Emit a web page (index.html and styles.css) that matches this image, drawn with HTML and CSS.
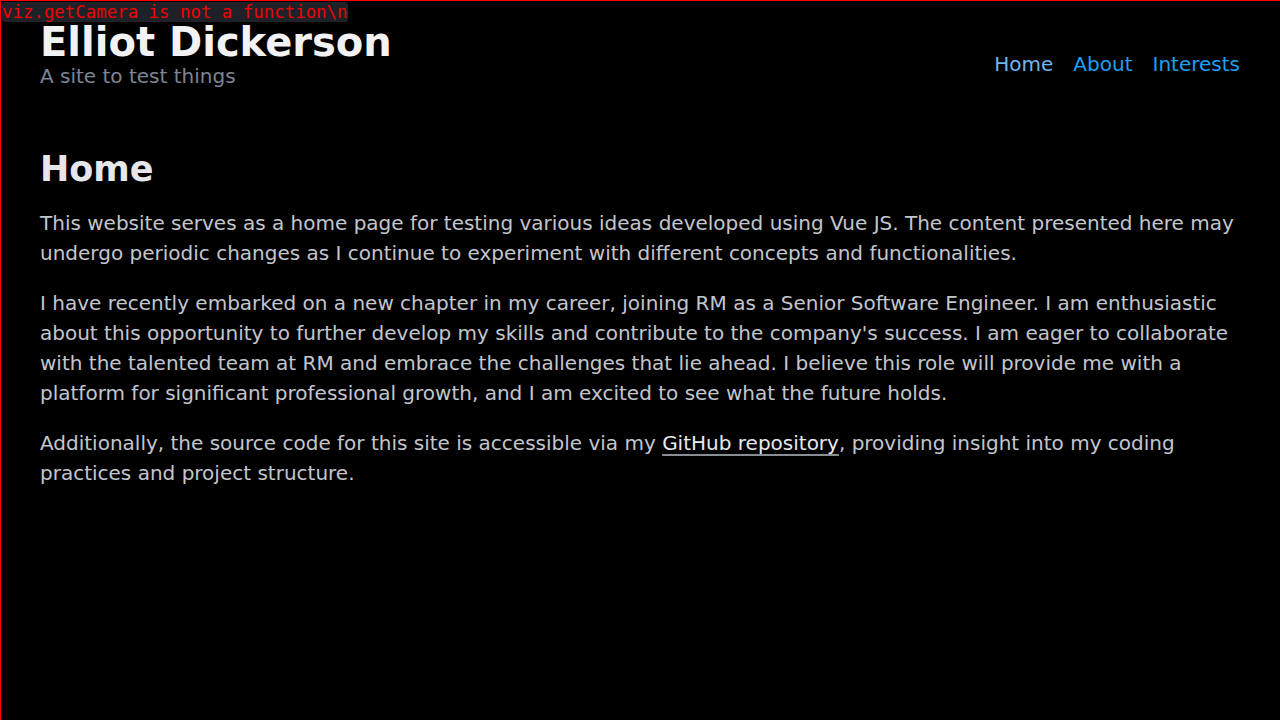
FILE: index.html
```html
<!DOCTYPE html>
<html lang="en">
<head>
<meta charset="utf-8">
<title>Elliot Dickerson</title>
<link rel="stylesheet" href="styles.css">
</head>
<body>
<div class="frame">
  <div class="error">viz.getCamera is not a function\n</div>
  <div class="page">
    <header class="site-header">
      <div class="brand">
        <h1 class="title">Elliot Dickerson</h1>
        <div class="subtitle">A site to test things</div>
      </div>
      <nav class="nav">
        <a class="nav-link active" href="#">Home</a>
        <a class="nav-link" href="#">About</a>
        <a class="nav-link" href="#">Interests</a>
      </nav>
    </header>
    <main class="content">
      <h2 class="heading">Home</h2>
      <p>This website serves as a home page for testing various ideas developed using Vue JS. The content presented here may undergo periodic changes as I continue to experiment with different concepts and functionalities.</p>
      <p>I have recently embarked on a new chapter in my career, joining RM as a Senior Software Engineer. I am enthusiastic about this opportunity to further develop my skills and contribute to the company's success. I am eager to collaborate with the talented team at RM and embrace the challenges that lie ahead. I believe this role will provide me with a platform for significant professional growth, and I am excited to see what the future holds.</p>
      <p>Additionally, the source code for this site is accessible via my <a class="link" href="#">GitHub repository</a>, providing insight into my coding practices and project structure.</p>
    </main>
  </div>
</div>
</body>
</html>
```
FILE: styles.css
```css
html, body {
  margin: 0;
  padding: 0;
  background: #000;
  height: 100%;
}
body {
  font-family: "DejaVu Sans", sans-serif;
  color: #c3c6cd;
  overflow: hidden;
}
.frame {
  height: 100%;
  box-sizing: border-box;
  border-top: 1px solid #ff0000;
  border-left: 1px solid #ff0000;
  position: relative;
}
.error {
  position: absolute;
  top: 1px;
  left: 1px;
  background: #1e2228;
  color: #f00000;
  font-family: "DejaVu Sans Mono", monospace;
  font-size: 17.4px;
  line-height: 20px;
  border-radius: 3px;
  white-space: pre;
  z-index: 2;
}
.page {
  padding: 0 40px 0 39px;
}
.site-header {
  display: flex;
  justify-content: space-between;
  align-items: flex-start;
  padding-top: 18px;
}
.title {
  margin: 0;
  font-size: 40px;
  line-height: 46px;
  font-weight: bold;
  color: #f2f2f4;
}
.subtitle {
  font-size: 20px;
  line-height: 22px;
  color: #7d8596;
}
.nav {
  display: flex;
  gap: 20px;
  padding-top: 34px;
}
.nav-link {
  font-size: 20px;
  line-height: 22px;
  color: #1e9ff0;
  text-decoration: none;
}
.nav-link.active {
  color: #72b5ef;
}
.content {
  padding-top: 59px;
}
.heading {
  margin: 0 0 16px;
  font-size: 35px;
  line-height: 46px;
  font-weight: bold;
  color: #e6e7ea;
}
.content p {
  margin: 0 0 20px;
  font-size: 20px;
  line-height: 30px;
}
.link {
  color: #e8e9ec;
  text-decoration: underline;
  text-decoration-color: #8a8d94;
  text-underline-offset: 4px;
}
```
